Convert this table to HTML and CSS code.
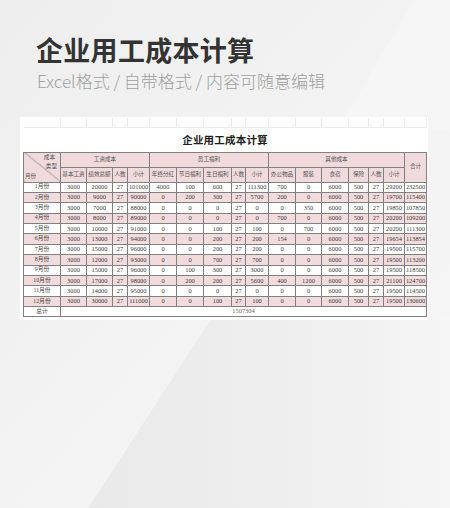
FILE: index.html
```html
<!DOCTYPE html>
<html lang="zh-CN">
<head>
<meta charset="utf-8">
<title>企业用工成本计算</title>
<link rel="stylesheet" href="styles.css">
</head>
<body>
<svg class="bg" width="450" height="508" viewBox="0 0 450 508" aria-hidden="true">
  <defs>
    <linearGradient id="base" x1="0" y1="0" x2="1" y2="1">
      <stop offset="0" stop-color="#eeeeee"/>
      <stop offset="0.5" stop-color="#f3f3f3"/>
      <stop offset="1" stop-color="#f6f6f6"/>
    </linearGradient>
    <linearGradient id="low" x1="0" y1="0" x2="1" y2="0">
      <stop offset="0" stop-color="#e9e9e9"/>
      <stop offset="0.6" stop-color="#efefef"/>
      <stop offset="1" stop-color="#f5f5f5"/>
    </linearGradient>
  </defs>
  <rect width="450" height="508" fill="url(#base)"/>
  <polygon points="413,0 450,0 450,130 338,130" fill="#f5f5f5"/>
  <polygon points="212,318 450,318 450,508 88,508" fill="url(#low)"/>
  <rect x="440" y="318" width="10" height="190" fill="#f6f6f6"/>
</svg>
<main class="page">
  <h1 class="title">企业用工成本计算</h1>
  <p class="subtitle">Excel格式 / 自带格式 / 内容可随意编辑</p>
  <section class="card">
    <table class="sheet">
      <colgroup>
        <col class="c37"><col class="c26"><col class="c26"><col class="c15"><col class="c22">
        <col class="c27"><col class="c27"><col class="c28"><col class="c14"><col class="c23">
        <col class="c27"><col class="c26"><col class="c27"><col class="c20"><col class="c15"><col class="c21">
        <col class="c22">
      </colgroup>
      <tr class="grid"><td></td><td></td><td></td><td></td><td></td><td></td><td></td><td></td><td></td><td></td><td></td><td></td><td></td><td></td><td></td><td></td><td></td></tr>
      <tr class="caption"><td colspan="17">企业用工成本计算</td></tr>
      <tr class="head head1">
        <th rowspan="2" class="corner">
          <div class="corner-in">
            <span class="k1">成本</span>
            <span class="k2">类型</span>
            <span class="k3">月份</span>
          </div>
        </th>
        <th colspan="4">工资成本</th>
        <th colspan="5">员工福利</th>
        <th colspan="6">其他成本</th>
        <th rowspan="2">合计</th>
      </tr>
      <tr class="head head2">
        <th>基本工资</th><th>绩效总额</th><th>人数</th><th>小计</th>
        <th>年终分红</th><th>节日福利</th><th>生日福利</th><th>人数</th><th>小计</th>
        <th>办公物品</th><th>服装</th><th>食宿</th><th>保险</th><th>人数</th><th>小计</th>
      </tr>
      <tr class="row"><td>1月份</td><td>3000</td><td>20000</td><td>27</td><td>101000</td><td>4000</td><td>100</td><td>600</td><td>27</td><td>111300</td><td>700</td><td>0</td><td>6000</td><td>500</td><td>27</td><td>29200</td><td>232500</td></tr>
      <tr class="row pink"><td>2月份</td><td>3000</td><td>9000</td><td>27</td><td>90000</td><td>0</td><td>200</td><td>300</td><td>27</td><td>5700</td><td>200</td><td>0</td><td>6000</td><td>500</td><td>27</td><td>19700</td><td>115400</td></tr>
      <tr class="row"><td>3月份</td><td>3000</td><td>7000</td><td>27</td><td>88000</td><td>0</td><td>0</td><td>0</td><td>27</td><td>0</td><td>0</td><td>350</td><td>6000</td><td>500</td><td>27</td><td>19850</td><td>107850</td></tr>
      <tr class="row pink"><td>4月份</td><td>3000</td><td>8000</td><td>27</td><td>89000</td><td>0</td><td>0</td><td>0</td><td>27</td><td>0</td><td>700</td><td>0</td><td>6000</td><td>500</td><td>27</td><td>20200</td><td>109200</td></tr>
      <tr class="row"><td>5月份</td><td>3000</td><td>10000</td><td>27</td><td>91000</td><td>0</td><td>0</td><td>100</td><td>27</td><td>100</td><td>0</td><td>700</td><td>6000</td><td>500</td><td>27</td><td>20200</td><td>111300</td></tr>
      <tr class="row pink"><td>6月份</td><td>3000</td><td>13000</td><td>27</td><td>94000</td><td>0</td><td>0</td><td>200</td><td>27</td><td>200</td><td>154</td><td>0</td><td>6000</td><td>500</td><td>27</td><td>19654</td><td>113854</td></tr>
      <tr class="row"><td>7月份</td><td>3000</td><td>15000</td><td>27</td><td>96000</td><td>0</td><td>0</td><td>200</td><td>27</td><td>200</td><td>0</td><td>0</td><td>6000</td><td>500</td><td>27</td><td>19500</td><td>115700</td></tr>
      <tr class="row pink"><td>8月份</td><td>3000</td><td>12000</td><td>27</td><td>93000</td><td>0</td><td>0</td><td>700</td><td>27</td><td>700</td><td>0</td><td>0</td><td>6000</td><td>500</td><td>27</td><td>19500</td><td>113200</td></tr>
      <tr class="row"><td>9月份</td><td>3000</td><td>15000</td><td>27</td><td>96000</td><td>0</td><td>100</td><td>300</td><td>27</td><td>3000</td><td>0</td><td>0</td><td>6000</td><td>500</td><td>27</td><td>19500</td><td>118500</td></tr>
      <tr class="row pink"><td>10月份</td><td>3000</td><td>17000</td><td>27</td><td>98000</td><td>0</td><td>200</td><td>200</td><td>27</td><td>5600</td><td>400</td><td>1200</td><td>6000</td><td>500</td><td>27</td><td>21100</td><td>124700</td></tr>
      <tr class="row"><td>11月份</td><td>3000</td><td>14000</td><td>27</td><td>95000</td><td>0</td><td>0</td><td>0</td><td>27</td><td>0</td><td>0</td><td>0</td><td>6000</td><td>500</td><td>27</td><td>19500</td><td>114500</td></tr>
      <tr class="row pink"><td>12月份</td><td>3000</td><td>30000</td><td>27</td><td>111000</td><td>0</td><td>0</td><td>100</td><td>27</td><td>100</td><td>0</td><td>0</td><td>6000</td><td>500</td><td>27</td><td>19500</td><td>130600</td></tr>
      <tr class="row total"><td>总计</td><td colspan="16">1507304</td></tr>
    </table>
  </section>
</main>
</body>
</html>
```

FILE: styles.css
```css
* { box-sizing: border-box; }

html, body {
  margin: 0;
  padding: 0;
}

body {
  width: 450px;
  height: 508px;
  overflow: hidden;
  position: relative;
  background: #f1f1f1;
  font-family: "Noto Sans CJK SC", "Noto Sans", sans-serif;
}

.bg {
  position: absolute;
  top: 0;
  left: 0;
  display: block;
}

.page {
  position: relative;
  padding: 35px 0 0 0;
}

.title {
  margin: 0 0 0 36px;
  font-size: 27px;
  line-height: 30px;
  font-weight: 700;
  color: #333333;
  letter-spacing: 0.3px;
}

.subtitle {
  margin: 6px 0 0 37px;
  font-size: 17px;
  line-height: 20px;
  font-weight: 300;
  color: #a0a0a0;
}

.card {
  margin: 26px 0 0 20px;
  width: 408px;
  height: 203px;
  background: #ffffff;
  padding: 1px 2px 3px 3px;
}

.sheet {
  border-collapse: collapse;
  table-layout: fixed;
  width: 403px;
  font-family: "Liberation Serif", "Noto Sans CJK SC", serif;
  font-size: 6.4px;
  line-height: 1;
  color: #3c3c3c;
}

.c37 { width: 37px; }
.c28 { width: 28px; }
.c27 { width: 27px; }
.c26 { width: 26px; }
.c23 { width: 23px; }
.c22 { width: 22px; }
.c21 { width: 21px; }
.c20 { width: 20px; }
.c15 { width: 15px; }
.c14 { width: 14px; }

.sheet td, .sheet th {
  padding: 0;
  text-align: center;
  vertical-align: middle;
  white-space: nowrap;
  overflow: hidden;
}

.grid td {
  height: 9px;
  border-right: 1px solid #ececec;
  border-bottom: 1px solid #ececec;
}

.caption td {
  height: 25px;
  font-family: "Noto Sans CJK SC", serif;
  font-size: 10.5px;
  font-weight: 700;
  color: #1e1e1e;
  letter-spacing: 0.2px;
  padding-top: 1px;
}

.head th {
  background: #f0dadb;
  border: 1px solid #808080;
  font-weight: 400;
  color: #555555;
  font-size: 5.6px;
}

.head1 th { height: 15px; }
.head2 th { height: 15px; }

.head .corner {
  background: #f0dadb linear-gradient(to top right, transparent calc(50% - 0.6px), #808080 50%, transparent calc(50% + 0.6px));
}

.corner-in {
  height: 29px;
  display: flex;
  flex-direction: column;
  justify-content: space-between;
  padding: 2px 3px 2px 1px;
}

.k1 { align-self: flex-end; margin-right: 2px; }
.k2 { align-self: flex-end; }
.k3 { align-self: flex-start; }

.row td {
  height: 10.4px;
  border: 1px solid #808080;
}

.row.pink td { background: #f1dbdc; }

.row td:first-child {
  font-size: 5.8px;
  color: #444444;
}

.total td {
  height: 10px;
  background: #ffffff;
  color: #666666;
}
```
